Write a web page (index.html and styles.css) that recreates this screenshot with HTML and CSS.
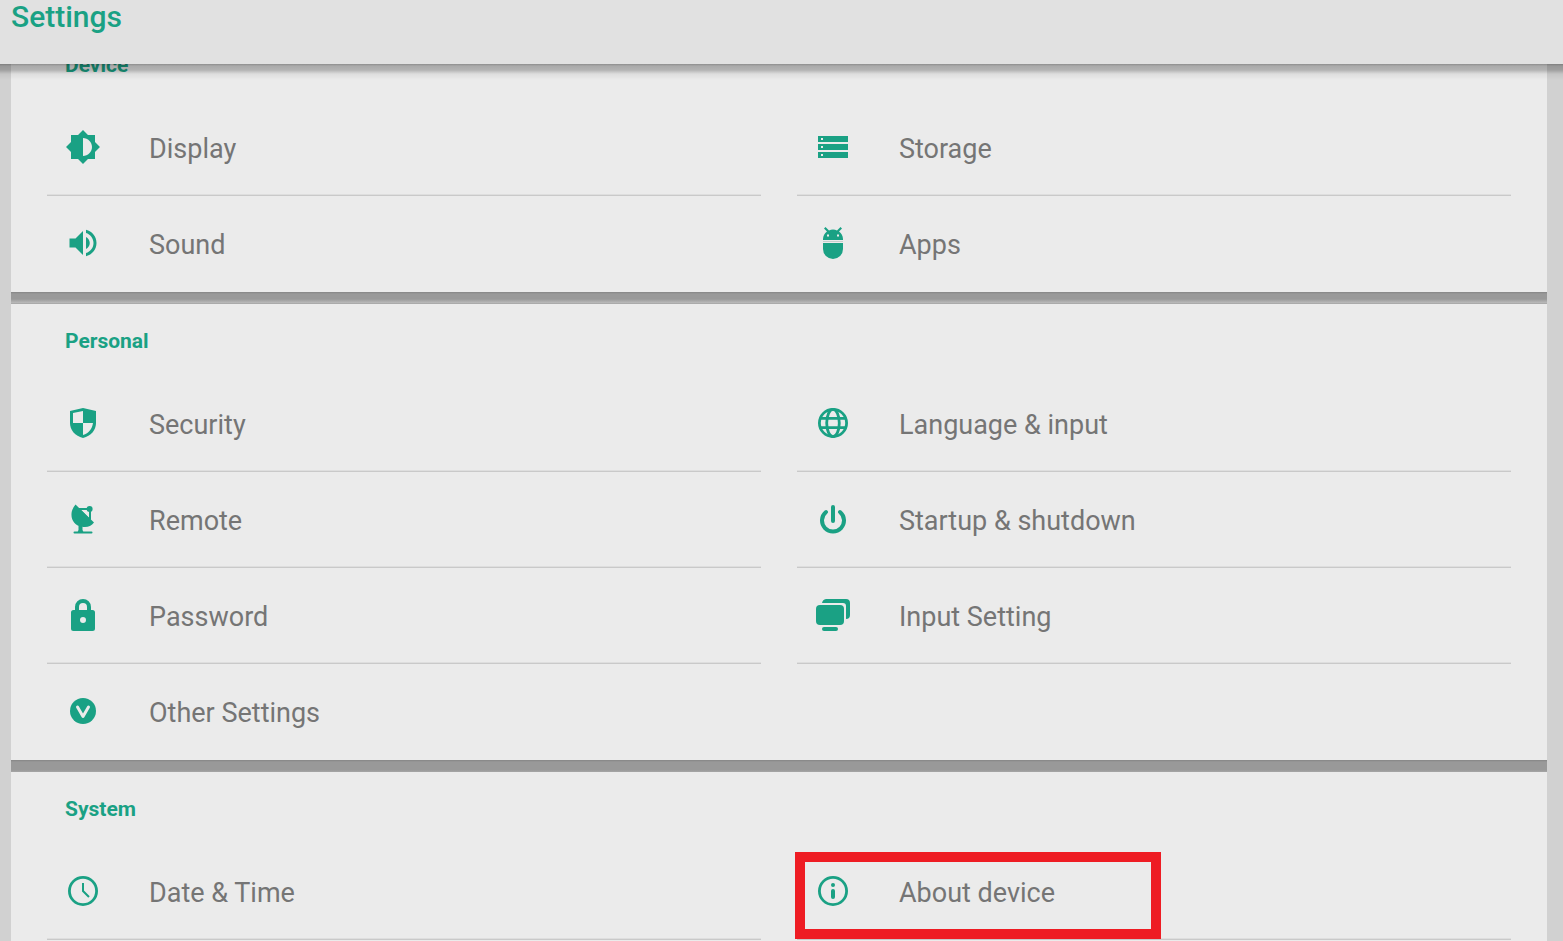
FILE: index.html
```html
<!DOCTYPE html>
<html lang="en">
<head>
    <meta charset="UTF-8">
    <meta name="viewport" content="width=device-width, initial-scale=1">
    <title>Settings</title>
    <link rel="stylesheet" href="styles.css">
</head>
<body>
<header class="topbar">
    <h1>Settings</h1>
</header>
<main class="settings">
    <section class="group">
        <h2>Device</h2>
        <ul class="list">
            <li><a href="#">
                <svg class="icon" viewBox="0 0 24 24"><path fill-rule="evenodd" d="M20 15.31L23.31 12 20 8.69V4h-4.69L12 .69 8.69 4H4v4.69L.69 12 4 15.31V20h4.69L12 23.31 15.31 20H20zM12 18V6c3.31 0 6 2.69 6 6s-2.69 6-6 6z"/></svg>
                <span>Display</span></a></li>
            <li><a href="#">
                <svg class="icon" viewBox="0 0 36 36"><path d="M3 7h30v6H3zM3 15h30v6H3zM3 23h30v6H3z"/><path class="cut" d="M6 9h2v2H6zM6 17h2v2H6zM6 25h2v2H6z"/></svg>
                <span>Storage</span></a></li>
            <li class="last"><a href="#">
                <svg class="icon" viewBox="0 0 24 24"><path d="M3 9v6h4l5 5V4L7 9H3zm13.5 3c0-1.77-1.02-3.29-2.5-4.03v8.05c1.48-.73 2.5-2.25 2.5-4.02zM14 3.23v2.06c2.89.86 5 3.54 5 6.71s-2.11 5.85-5 6.71v2.06c4.01-.91 7-4.49 7-8.77s-2.99-7.86-7-8.77z"/></svg>
                <span>Sound</span></a></li>
            <li class="last"><a href="#">
                <svg class="icon" viewBox="0 0 36 36"><path d="M8 15v-1a10 10 0 0 1 4-7.500L9 3.500 10.500 2l3.500 3.400a10 10 0 0 1 8 0L25.500 2 27 3.500l-3 3a10 10 0 0 1 4 7.500v1zM8 18h20v6a10 10 0 0 1-20 0z"/><path class="cut" d="M12 9.500h2v2h-2zM22 9.500h2v2h-2z"/><path class="seam" d="M8 16.500h20"/></svg>
                <span>Apps</span></a></li>
        </ul>
    </section>
    <hr class="divider fade">
    <section class="group">
        <h2>Personal</h2>
        <ul class="list">
            <li><a href="#">
                <svg class="icon" viewBox="0 0 36 36"><path d="M18 3l13 3v12c0 7-5 13-13 15C10 31 5 25 5 18V6z"/><path class="cut" d="M8 8l10-2v12H8zM18 18h10c-1 6-4 10-10 12z"/></svg>
                <span>Security</span></a></li>
            <li><a href="#">
                <svg class="icon line" viewBox="0 0 36 36"><circle cx="18" cy="18" r="13.6"/><ellipse cx="18" cy="18" rx="6.3" ry="13.6"/><path d="M5 13.4h26M5 22.6h26"/></svg>
                <span>Language &amp; input</span></a></li>
            <li><a href="#">
                <svg class="icon" viewBox="0 0 36 36"><path d="M10.5 3.500L29 21.500c-3 4-8 5.500-12.500 4C6.500 24 3 12 10.500 3.500z"/><circle cx="24.600" cy="8" r="3"/><path d="M13 7h11v2h-8l8 8V8h2v11l-2-1zM13.500 24h4v5l1 2h-6l1-2zM9.500 30.500h17a1 1 0 0 1 0 2h-17a1 1 0 0 1 0-2z"/></svg>
                <span>Remote</span></a></li>
            <li><a href="#">
                <svg class="icon power" viewBox="0 0 36 36"><path d="M11 11a11 11 0 1 0 14 0M18 6v14"/></svg>
                <span>Startup &amp; shutdown</span></a></li>
            <li><a href="#">
                <svg class="icon" viewBox="0 0 36 36"><path fill-rule="evenodd" d="M8.500 13H10v-3a8 8 0 0 1 16 0v3h1.500a2.500 2.500 0 0 1 2.500 2.500v16a2.500 2.500 0 0 1-2.500 2.500h-19A2.500 2.500 0 0 1 6 31.500v-16A2.500 2.500 0 0 1 8.500 13zM14 13h8v-3a4 4 0 0 0-8 0zM18 20a3 3 0 1 0 0 6 3 3 0 0 0 0-6z"/></svg>
                <span>Password</span></a></li>
            <li><a href="#">
                <svg class="icon" viewBox="0 0 36 36"><rect x="1" y="8" width="28" height="20" rx="4"/><path d="M7 6a5 5 0 0 1 4-4h20a4 4 0 0 1 4 4v12a4 4 0 0 1-4 4V9a3 3 0 0 0-3-3z"/><rect x="7" y="30" width="16" height="4" rx="2"/></svg>
                <span>Input Setting</span></a></li>
            <li class="last"><a href="#">
                <svg class="icon" viewBox="0 0 36 36"><circle cx="18" cy="18" r="13"/><path class="check" d="M12.500 14L18 23.500 23.500 14"/></svg>
                <span>Other Settings</span></a></li>
        </ul>
    </section>
    <hr class="divider">
    <section class="group">
        <h2>System</h2>
        <ul class="list">
            <li><a href="#">
                <svg class="icon line" viewBox="0 0 36 36"><circle cx="18" cy="18" r="13.6"/><path class="hands" d="M18 10v8l6 6"/></svg>
                <span>Date &amp; Time</span></a></li>
            <li class="marked"><a href="#">
                <svg class="icon line" viewBox="0 0 36 36"><circle cx="18" cy="18" r="13.6"/><circle class="dot" cx="18" cy="12" r="2"/><path class="stem" d="M18 18v6"/></svg>
                <span>About device</span></a></li>
        </ul>
    </section>
</main>
</body>
</html>
```
FILE: styles.css
```css
*,*::after{margin:0;padding:0;box-sizing:border-box;}
body{
    display:flex;
    flex-direction:column;
    height:100vh;
    overflow:hidden;
    background:#d1d1d1;
    font-family:Roboto, "Liberation Sans", sans-serif;
    color:#757575;
}
ul{list-style:none;}
a{color:inherit;text-decoration:none;}

/* top bar */
.topbar{
    position:relative;
    z-index:2;
    flex:none;
    height:64px;
    padding-left:11px;
    background:#e1e1e1;
}
.topbar h1{
    font-size:30px;
    line-height:34px;
    font-weight:500;
    color:#1aa184;
}
.topbar::after{
    content:"";
    position:absolute;
    left:0;
    right:0;
    top:100%;
    height:16px;
    background:linear-gradient(rgba(0,0,0,.4), rgba(0,0,0,.28) 2px, rgba(0,0,0,.24) 6px, rgba(0,0,0,.06) 10px, rgba(0,0,0,0));
}

/* the list is scrolled a little way under the bar */
.settings{
    display:flex;
    flex-direction:column;
    flex:1;
    margin:-36px 16px 0 11px;
}
.group{
    flex:none;
    padding:0 36px;
    background:#ebebeb;
}
.group:last-child{
    flex:1 0 auto;
}
.group h2{
    padding:2px 0 0 18px;
    font-size:21px;
    line-height:70px;
    font-weight:700;
    color:#1aa184;
}
.divider{
    flex:none;
    height:12px;
    border:0;
    background:linear-gradient(#858585, #999 2px, #999 10px, #a6a6a6);
}
.divider.fade{
    background:linear-gradient(#858585, #999 2px, #999 7px, #bbb 11px, #aaa 11px);
}

.list{
    display:grid;
    grid-template-columns:1fr 1fr;
    column-gap:36px;
}
.list li{
    position:relative;
    height:96px;
    border-bottom:1px solid #c9c9c9;
    box-shadow:inset 0 -1px #dedede;
}
.list .last{
    border-color:transparent;
    box-shadow:none;
}
.list a{
    display:flex;
    align-items:center;
    gap:48px;
    height:100%;
    padding:0 0 2px 18px;
    font-size:27px;
    line-height:32px;
}
.list span{
    padding-top:4px;
}
.marked::after{
    content:"";
    position:absolute;
    left:-2px;
    top:8px;
    width:366px;
    height:87px;
    border:10px solid #ee1c23;
    pointer-events:none;
}

/* icons */
.icon{
    flex:none;
    width:36px;
    height:36px;
    fill:#1aa184;
}
.icon .cut{fill:#ebebeb;}
.line,.power{
    fill:none;
    stroke:#1aa184;
    stroke-width:2.8;
}
.power{
    stroke-width:4;
    stroke-linecap:round;
}
.check{
    fill:none;
    stroke:#ebebeb;
    stroke-width:3;
    stroke-linecap:round;
    stroke-linejoin:round;
}
.seam{stroke:#c4cfcc;stroke-width:1;}
.hands{stroke-width:2;}
.dot{fill:#1aa184;stroke:none;}
.stem{
    stroke-width:4;
    stroke-linecap:round;
}
```
